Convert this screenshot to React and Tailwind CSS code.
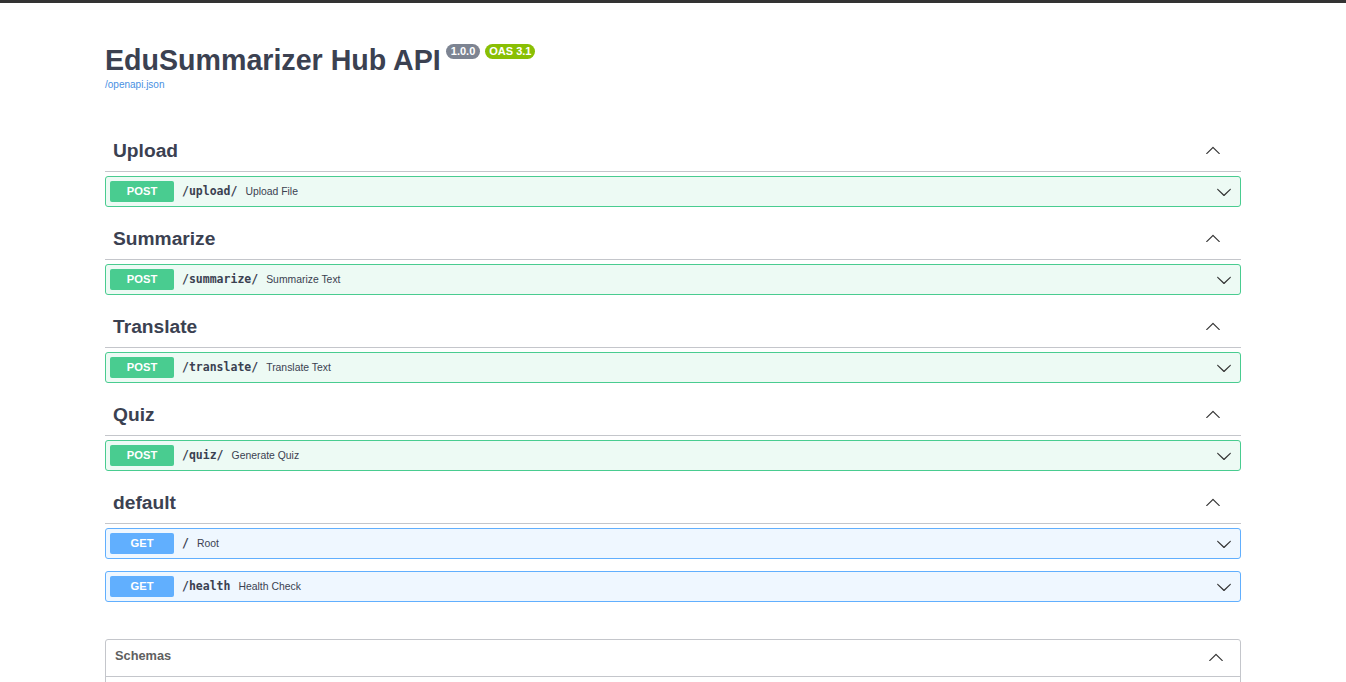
const sans = { fontFamily: '"Liberation Sans", Arial, sans-serif' };

const tags = [
  { name: "Upload", ops: [{ method: "POST", path: "/upload/", desc: "Upload File" }] },
  { name: "Summarize", ops: [{ method: "POST", path: "/summarize/", desc: "Summarize Text" }] },
  { name: "Translate", ops: [{ method: "POST", path: "/translate/", desc: "Translate Text" }] },
  { name: "Quiz", ops: [{ method: "POST", path: "/quiz/", desc: "Generate Quiz" }] },
  {
    name: "default",
    ops: [
      { method: "GET", path: "/", desc: "Root" },
      { method: "GET", path: "/health", desc: "Health Check" },
    ],
  },
];

function ArrowUp({ className = "" }) {
  return (
    <svg viewBox="0 0 20 20" width="16" height="16" className={className} fill="#333">
      <path d="M17.418 14.908c.272.268.709.268.979 0s.271-.701 0-.969l-7.908-7.83c-.27-.268-.707-.268-.979 0l-7.908 7.83c-.27.268-.27.701 0 .969.271.268.709.268.979 0L10 7.767l7.418 7.141z" />
    </svg>
  );
}

function ArrowDown({ className = "" }) {
  return (
    <svg viewBox="0 0 20 20" width="16" height="16" className={className} fill="#333">
      <path d="M17.418 6.109c.272-.268.709-.268.979 0s.271.701 0 .969l-7.908 7.83c-.27.268-.707.268-.979 0l-7.908-7.83c-.27-.268-.27-.701 0-.969.271-.268.709-.268.979 0L10 13.25l7.418-7.141z" />
    </svg>
  );
}

function Operation({ op }) {
  const isGet = op.method === "GET";
  return (
    <div
      className={`mb-[12px] flex h-[31px] items-center rounded-[3px] border p-[4px] pr-[8px] ${
        isGet ? "border-[#61affe] bg-[#eff7ff]" : "border-[#49cc90] bg-[#edfaf4]"
      }`}
    >
      <span
        className={`flex h-[21px] w-[64px] items-center justify-center rounded-[2px] text-[11.2px] font-bold text-white ${
          isGet ? "bg-[#61affe]" : "bg-[#49cc90]"
        }`}
        style={sans}
      >
        {op.method}
      </span>
      <span
        className="px-[8px] text-[11.5px] font-bold text-[#3b4151]"
        style={{ fontFamily: '"DejaVu Sans Mono", monospace' }}
      >
        {op.path}
      </span>
      <span className="flex-1 text-[10.4px] text-[#3b4151]" style={sans}>
        {op.desc}
      </span>
      <ArrowDown />
    </div>
  );
}

function TagSection({ tag }) {
  return (
    <div>
      <div className="mb-[4px] flex h-[41px] items-center border-b border-[#c4c6cb] pl-[8px] pr-[20px]">
        <h3 className="flex-1 text-[19.2px] font-bold leading-[22px] text-[#3b4151]" style={sans}>
          {tag.name}
        </h3>
        <ArrowUp className="-mt-[3px]" />
      </div>
      {tag.ops.map((op) => (
        <Operation key={op.path} op={op} />
      ))}
    </div>
  );
}

export default function App() {
  return (
    <div className="min-h-[682px] bg-white" style={sans}>
      <div className="h-[3px] bg-[#333333]" />
      <div className="mx-auto w-[1136px]">
        <div className="mb-[40px] mt-[41px]">
          <h2 className="flex items-start text-[28.6px] font-bold leading-[33px] text-[#3b4151]" style={sans}>
            EduSummarizer Hub API
            <span className="ml-[5px] flex h-[15px] items-center rounded-full bg-[#7d8492] px-[5px] text-[11px] font-bold leading-none text-white">
              1.0.0
            </span>
            <span className="ml-[5px] flex h-[15px] items-center rounded-full bg-[#89bf04] px-[4px] text-[11px] font-bold leading-none text-white">
              OAS 3.1
            </span>
          </h2>
          <a className="mt-[2px] block text-[10px] leading-[12px] text-[#4990e2]" style={sans}>
            /openapi.json
          </a>
        </div>

        {tags.map((t) => (
          <TagSection key={t.name} tag={t} />
        ))}

        <div className="mt-[37px] rounded-[3px] border border-[#c4c6cb]">
          <div className="flex h-[37px] items-start border-b border-[#c4c6cb] pl-[9px] pr-[16px] pt-[8px]">
            <h4 className="flex-1 text-[12.8px] font-bold leading-[16px] text-[#606060]" style={sans}>
              Schemas
            </h4>
            <ArrowUp className="mt-[1px]" />
          </div>
          <div className="h-[40px]" />
        </div>
      </div>
    </div>
  );
}
